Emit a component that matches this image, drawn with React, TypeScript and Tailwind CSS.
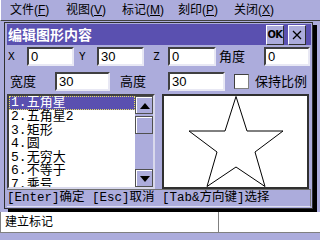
import React from "react";

const menus = [
  ["文件", "F"],
  ["视图", "V"],
  ["标记", "M"],
  ["刻印", "P"],
  ["关闭", "X"],
];

const items = ["五角星", "五角星2", "矩形", "圆", "无穷大", "不等于", "乘号"];

function Input({ w, value }: { w: string; value: string }) {
  return (
    <div
      className={`${w} h-[19px] bg-white border-2 border-t-[#404040] border-l-[#404040] border-r-[#e8e8f4] border-b-[#e8e8f4] flex items-center pl-[2px] text-[13px] leading-none text-black font-['Liberation_Sans',sans-serif]`}
    >
      {value}
    </div>
  );
}

function ScrollBtn({ children, h }: { children?: React.ReactNode; h: string }) {
  return (
    <div className={`w-[18px] ${h} border border-[#505050] flex`}>
      <div className="flex-1 border-t border-l border-white bg-[#acacdc] flex items-center justify-center">
        {children}
      </div>
    </div>
  );
}

export default function App() {
  return (
    <div className="w-[320px] h-[240px] bg-[#acacdc] overflow-hidden text-black font-['Liberation_Sans','Noto_Sans_CJK_SC',sans-serif]">
      {/* menu bar */}
      <div className="h-[21px] border-b border-[#404040] border-l border-l-white flex items-center pl-[9px] text-[12px] leading-none">
        {menus.map(([t, k]) => (
          <div key={k} className="w-[56px] shrink-0 whitespace-nowrap">
            {t}(<span className="underline">{k}</span>)
          </div>
        ))}
      </div>

      {/* dialog */}
      <div className="ml-[4px] mt-[1px] w-[309px] border border-[#303030] shadow-[4px_3px_0_0_#000] pl-[2px] pr-[1px] pt-[1px] pb-[1px]">
        {/* title */}
        <div className="h-[21px] bg-[#5a50b0] flex items-center pl-[1px] pr-[5px]">
          <div className="flex-1 text-white font-bold text-[14px] leading-none">
            编辑图形内容
          </div>
          <div className="w-[18px] h-[20px] bg-[#acacdc] border border-t-white border-l-white border-r-[#303030] border-b-[#303030] flex items-center justify-center overflow-hidden">
            <span className="text-[11px] font-bold leading-none font-['DejaVu_Sans_Condensed','DejaVu_Sans',sans-serif] tracking-[-0.5px]">
              OK
            </span>
          </div>
          <div className="ml-[4px] w-[18px] h-[20px] bg-[#acacdc] border border-t-white border-l-white border-r-[#303030] border-b-[#303030] flex items-center justify-center">
            <svg width="10" height="10" viewBox="0 0 10 10">
              <path d="M1 1L9 9M9 1L1 9" stroke="#000" strokeWidth="1.3" />
            </svg>
          </div>
        </div>

        {/* row 1 */}
        <div className="mt-[2px] h-[19px] flex items-center text-[12px] leading-none">
          <div className="ml-[1px] w-[19px] font-['DejaVu_Sans_Mono',monospace] text-[11px]">X</div>
          <Input w="w-[47px]" value="0" />
          <div className="w-[23px] pl-[5px] font-['DejaVu_Sans_Mono',monospace] text-[11px]">Y</div>
          <Input w="w-[47px]" value="30" />
          <div className="w-[24px] pl-[9px] font-['DejaVu_Sans_Mono',monospace] text-[11px]">Z</div>
          <Input w="w-[48px]" value="0" />
          <div className="w-[48px] pl-[3px] text-[13px]">角度</div>
          <Input w="w-[46px]" value="0" />
        </div>

        {/* row 2 */}
        <div className="mt-[6px] h-[19px] flex items-center text-[13px] leading-none">
          <div className="ml-[3px] w-[45px]">宽度</div>
          <Input w="w-[55px]" value="30" />
          <div className="w-[58px] pl-[10px]">高度</div>
          <Input w="w-[57px]" value="30" />
          <div className="ml-[9px] w-[15px] h-[15px] bg-white border border-t-[#404040] border-l-[#404040] border-r-[#808080] border-b-[#808080]" />
          <div className="ml-[6px]">保持比例</div>
        </div>

        {/* list + preview */}
        <div className="mt-[3px] flex h-[95px]">
          <div className="w-[148px] h-[95px] bg-white border-2 border-t-[#404040] border-l-[#404040] border-r-[#d8d8ec] border-b-[#d8d8ec] flex overflow-hidden">
            <div className="flex-1 h-[91px] overflow-hidden font-['Liberation_Mono','Noto_Sans_CJK_SC',monospace] text-[13px]">
              {items.map((t, i) => (
                <div
                  key={t}
                  className={
                    i === 0
                      ? "h-[14px] leading-[12px] bg-[#5a50b0] text-white border border-dotted border-[#e8e060] pl-[1px] whitespace-nowrap"
                      : "h-[13.5px] leading-[13.5px] pl-[2px] whitespace-nowrap"
                  }
                >
                  {i + 1}.{t}
                </div>
              ))}
            </div>
            <div className="w-[18px] bg-[#acacdc] flex flex-col">
              <ScrollBtn h="h-[18px]">
                <svg width="10" height="6" viewBox="0 0 10 6">
                  <path d="M5 0L10 6H0Z" fill="#000" />
                </svg>
              </ScrollBtn>
              <div className="mt-[2px]">
                <ScrollBtn h="h-[18px]" />
              </div>
              <div className="flex-1" />
              <ScrollBtn h="h-[18px]">
                <svg width="10" height="6" viewBox="0 0 10 6">
                  <path d="M0 0H10L5 6Z" fill="#000" />
                </svg>
              </ScrollBtn>
            </div>
          </div>
          <div className="ml-[7px] w-[147px] h-[95px] bg-white border-2 border-[#303030]">
            <svg width="143" height="91" viewBox="0 0 143 91">
              <path
                d="M72 0.5L83 35H119L91 56L101 90.5L72 71L43 90.5L53 56L25 35H61Z"
                fill="none"
                stroke="#000"
                strokeWidth="1"
              />
            </svg>
          </div>
        </div>

        {/* status */}
        <div className="h-[18px] border-t border-t-[#707070] border-b border-b-[#e0e0f0] border-r border-r-[#808080] flex items-center whitespace-nowrap font-['Liberation_Mono','Noto_Sans_CJK_SC',monospace] text-[12.5px] leading-none">
          [Enter]确定 [Esc]取消 [Tab&amp;方向键]选择
        </div>
      </div>

      {/* bottom panel */}
      <div className="mt-[3px] h-[21px] bg-white border-b border-[#808080] border-l border-l-[#808080] flex">
        <div className="w-[218px] border-r border-[#808080] flex items-center pl-[4px] text-[12px] leading-none">
          建立标记
        </div>
        <div className="flex-1" />
      </div>
    </div>
  );
}
